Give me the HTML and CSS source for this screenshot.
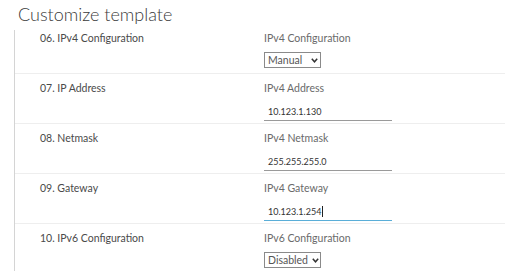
FILE: index.html
```html
<!DOCTYPE html>
<html>
<head>
<meta charset="utf-8">
<link rel="stylesheet" href="styles.css">
</head>
<body>
<h1 class="title">Customize template</h1>
<div class="list">
  <div class="row row-first">
    <div class="name">06. IPv4 Configuration</div>
    <div class="field">
      <div class="flabel">IPv4 Configuration</div>
      <div class="select"><span class="sel-text">Manual</span><svg class="chev chev-manual" width="7" height="5" viewBox="0 0 7 5"><polyline points="0.8,0.8 3.5,3.8 6.2,0.8" fill="none" stroke="#333" stroke-width="1.5"/></svg></div>
    </div>
  </div>
  <div class="row">
    <div class="name">07. IP Address</div>
    <div class="field">
      <div class="flabel">IPv4 Address</div>
      <div class="input">10.123.1.130</div>
    </div>
  </div>
  <div class="row">
    <div class="name">08. Netmask</div>
    <div class="field">
      <div class="flabel">IPv4 Netmask</div>
      <div class="input">255.255.255.0</div>
    </div>
  </div>
  <div class="row">
    <div class="name">09. Gateway</div>
    <div class="field">
      <div class="flabel">IPv4 Gateway</div>
      <div class="input input-focus">10.123.1.254<span class="caret"></span></div>
    </div>
  </div>
  <div class="row">
    <div class="name">10. IPv6 Configuration</div>
    <div class="field">
      <div class="flabel">IPv6 Configuration</div>
      <div class="select"><span class="sel-text">Disabled</span><svg class="chev" width="7" height="5" viewBox="0 0 7 5"><polyline points="0.8,0.8 3.5,3.8 6.2,0.8" fill="none" stroke="#333" stroke-width="1.5"/></svg></div>
    </div>
  </div>
</div>
</body>
</html>
```

FILE: styles.css
```css
html, body {
  margin: 0;
  padding: 0;
  background: #fff;
  overflow: hidden;
}
body {
  font-family: Lato, "Open Sans", sans-serif;
  color: #565656;
}
.title {
  margin: 0;
  padding: 4px 0 6px 18px;
  height: 20px;
  font-size: 18px;
  line-height: 20px;
  font-weight: 300;
  color: #3a3a3a;
}
.list {
  margin-left: 14px;
  border-left: 1px solid #d4d4d4;
}
.row {
  display: grid;
  grid-template-columns: 224px 1fr;
  box-sizing: border-box;
  height: 50px;
  padding: 8px 0 0 25px;
  border-top: 1px solid #eeeeee;
}
.row-first {
  height: 43px;
  border-top: none;
  padding-top: 2px;
}
.name {
  font-size: 10.5px;
  line-height: 13px;
  font-weight: 400;
  color: #4a4a4a;
}
.field {
  display: flex;
  flex-direction: column;
  align-items: flex-start;
}
.flabel {
  font-size: 10.5px;
  line-height: 13px;
  color: #6a6a6a;
}
.select {
  margin-top: 7px;
  box-sizing: border-box;
  width: 57px;
  height: 16px;
  border: 1px solid #8a8a8a;
  display: flex;
  align-items: center;
  padding-left: 3px;
  font-size: 10.5px;
  color: #555;
}
.sel-text {
  line-height: 14px;
}
.chev {
  margin-left: 4px;
}
.chev-manual {
  margin-left: 9px;
}
.input {
  margin-top: 8px;
  box-sizing: border-box;
  width: 128px;
  height: 18px;
  border-bottom: 1px solid #9a9a9a;
  padding-left: 4px;
  font-size: 9px;
  line-height: 17px;
  color: #333;
  display: flex;
  align-items: center;
}
.input-focus {
  border-bottom-color: #5aaed8;
}
.caret {
  display: inline-block;
  width: 1px;
  height: 11px;
  background: #222;
  margin-left: 1px;
}
```
